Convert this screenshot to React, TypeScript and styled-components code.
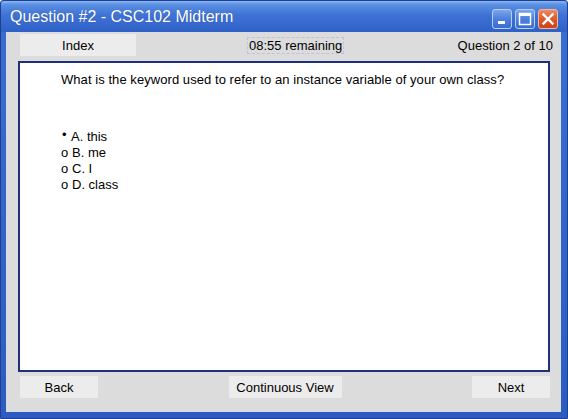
import React from "react";
import styled, { createGlobalStyle } from "styled-components";

const Global = createGlobalStyle`
  html, body { margin: 0; padding: 0; background: #ffffff; }
  body { font-family: "Liberation Sans", Arial, sans-serif; }
`;

const Window = styled.div`
  width: 568px;
  height: 419px;
  box-sizing: border-box;
  display: flex;
  flex-direction: column;
  background: linear-gradient(180deg, #3a6fd0 0%, #2c5cc0 100%);
  border: 1px solid #1d3f94;
  border-radius: 3px 3px 0 0;
  padding: 0 6px 6px 5px;
`;

const TitleBar = styled.div`
  height: 31px;
  display: flex;
  align-items: center;
  margin: 0 -6px 0 -5px;
  padding: 0 9px 0 9px;
  background: linear-gradient(180deg, #8ab6f2 0%, #5a8fe2 12%, #3f72d6 45%, #2f60c6 100%);
  border-radius: 3px 3px 0 0;
`;

const Title = styled.div`
  flex: 1;
  color: #ffffff;
  font-size: 16px;
  padding-top: 1px;
  text-shadow: 0 0 1px rgba(0, 0, 0, 0.3);
`;

const Controls = styled.div`
  display: flex;
  gap: 3px;
  margin-top: 4px;
`;

const Ctl = styled.div<{ $close?: boolean }>`
  width: 20px;
  height: 20px;
  box-sizing: border-box;
  border: 1px solid ${(p) => (p.$close ? "#f0b8a0" : "#b8cff2")};
  border-radius: 3px;
  background: ${(p) =>
    p.$close
      ? "linear-gradient(180deg, #ef8a62 0%, #dd5a2c 50%, #cc4418 100%)"
      : "linear-gradient(180deg, #7aa6ec 0%, #4d80dc 50%, #3a6cd0 100%)"};
  display: flex;
  align-items: center;
  justify-content: center;
`;

const Body = styled.div`
  flex: 1;
  background: #dcdcdc;
  display: flex;
  flex-direction: column;
  padding: 2px 5px 14px 12px;
`;

const TopRow = styled.div`
  height: 22px;
  display: flex;
  align-items: center;
  padding-left: 2px;
  margin-bottom: 5px;
`;

const Btn = styled.div<{ $w: number }>`
  width: ${(p) => p.$w}px;
  height: 22px;
  background: #ececec;
  display: flex;
  align-items: center;
  justify-content: center;
  font-size: 13px;
  color: #000;
`;

const Timer = styled.div`
  height: 17px;
  box-sizing: border-box;
  border: 1px dashed #c0c0e0;
  padding: 0 1px;
  display: flex;
  align-items: center;
  font-size: 13px;
  color: #000;
  margin-left: 111px;
`;

const Counter = styled.div`
  flex: 1;
  font-size: 13px;
  color: #000;
  text-align: right;
  padding-right: 3px;
`;

const Panel = styled.div`
  flex: 1;
  background: #ffffff;
  border: 2px solid #1e2f7e;
  margin-right: 6px;
  padding: 9px 0 0 41px;
  font-size: 13px;
  color: #000;
`;

const Question = styled.div`
  margin-bottom: 41px;
  line-height: 16px;
  letter-spacing: 0.06px;
`;

const Option = styled.div`
  line-height: 16px;
  display: flex;
  align-items: center;
`;

const Mark = styled.span<{ $sel?: boolean }>`
  display: inline-block;
  width: ${(p) => (p.$sel ? "10px" : "11px")};
  text-align: left;
  font-size: 13px;
  position: relative;
  left: ${(p) => (p.$sel ? "1px" : "0")};
  top: ${(p) => (p.$sel ? "-2px" : "0")};
`;

const BottomRow = styled.div`
  height: 22px;
  margin-top: 4px;
  display: flex;
  align-items: center;
  justify-content: space-between;
  padding: 0 6px 0 2px;
`;

export default function App() {
  const opts = [
    { l: "A. this", sel: true },
    { l: "B. me" },
    { l: "C. I" },
    { l: "D. class" },
  ];
  return (
    <>
      <Global />
      <Window>
        <TitleBar>
          <Title>Question #2 - CSC102 Midterm</Title>
          <Controls>
            <Ctl>
              <svg width="12" height="12" viewBox="0 0 12 12">
                <rect x="2" y="8" width="7" height="3" fill="#fff" />
              </svg>
            </Ctl>
            <Ctl>
              <svg width="14" height="14" viewBox="0 0 14 14">
                <rect x="1.5" y="1.5" width="11" height="11" fill="none" stroke="#fff" strokeWidth="1.5" />
                <rect x="1.5" y="1.5" width="11" height="2.5" fill="#fff" />
              </svg>
            </Ctl>
            <Ctl $close>
              <svg width="14" height="14" viewBox="0 0 14 14">
                <path d="M2.5 2.5 L11.5 11.5 M11.5 2.5 L2.5 11.5" stroke="#fff" strokeWidth="2.4" strokeLinecap="square" />
              </svg>
            </Ctl>
          </Controls>
        </TitleBar>
        <Body>
          <TopRow>
            <Btn $w={116}>Index</Btn>
            <Timer>08:55 remaining</Timer>
            <Counter>Question 2 of 10</Counter>
          </TopRow>
          <Panel>
            <Question>What is the keyword used to refer to an instance variable of your own class?</Question>
            {opts.map((o) => (
              <Option key={o.l}>
                <Mark $sel={o.sel}>{o.sel ? "•" : "o"}</Mark>
                {o.l}
              </Option>
            ))}
          </Panel>
          <BottomRow>
            <Btn $w={78}>Back</Btn>
            <Btn $w={113}>Continuous View</Btn>
            <Btn $w={78}>Next</Btn>
          </BottomRow>
        </Body>
      </Window>
    </>
  );
}
